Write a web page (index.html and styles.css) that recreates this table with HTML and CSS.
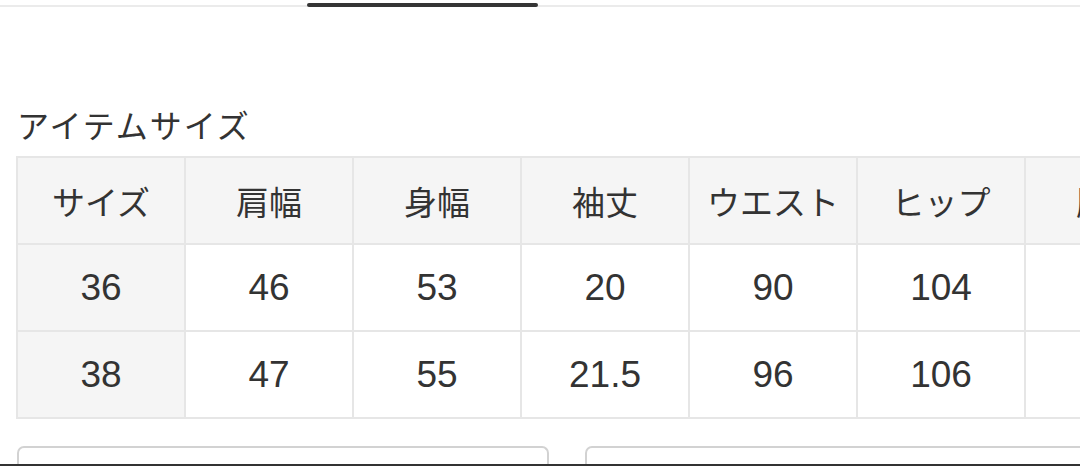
FILE: index.html
```html
<!DOCTYPE html>
<html lang="ja">
<head>
<meta charset="utf-8">
<link rel="stylesheet" href="styles.css">
</head>
<body>
<div class="tabs"><div class="tab-active"></div></div>
<h2 class="title">アイテムサイズ</h2>
<table class="sizes">
  <colgroup>
    <col class="c"><col class="c"><col class="c"><col class="c"><col class="c"><col class="c"><col class="c">
  </colgroup>
  <thead>
    <tr><th>サイズ</th><th>肩幅</th><th>身幅</th><th>袖丈</th><th>ウエスト</th><th>ヒップ</th><th>股下</th></tr>
  </thead>
  <tbody>
    <tr><td class="first">36</td><td>46</td><td>53</td><td>20</td><td>90</td><td>104</td><td></td></tr>
    <tr><td class="first">38</td><td>47</td><td>55</td><td>21.5</td><td>96</td><td>106</td><td></td></tr>
  </tbody>
</table>
<div class="boxes">
  <div class="box box-left"></div>
  <div class="box box-right"></div>
</div>
<div class="edge"></div>
</body>
</html>
```
FILE: styles.css
```css
html, body {
  margin: 0;
  padding: 0;
  background: #fff;
  width: 1080px;
  height: 466px;
  overflow: hidden;
}
body {
  font-family: "Liberation Sans", "Noto Sans CJK JP", sans-serif;
  color: #333;
  display: flex;
  flex-direction: column;
}
.tabs {
  display: flex;
  padding-left: 307px;
  height: 5px;
  border-bottom: 2px solid #ebebeb;
  flex: none;
}
.tab-active {
  width: 231px;
  height: 4px;
  margin-top: 3px;
  background: #353535;
  border-radius: 2px;
}
.title {
  margin: 97px 0 0 17px;
  font-family: "Noto Sans CJK JP", sans-serif;
  font-weight: 400;
  font-size: 32px;
  line-height: 40px;
  height: 40px;
  letter-spacing: 2px;
  flex: none;
}
.sizes {
  margin: 12px 0 0 16px;
  border-collapse: collapse;
  table-layout: fixed;
  width: 1176px;
  flex: none;
}
.sizes .c {
  width: 168px;
}
.sizes th,
.sizes td {
  border: 2px solid #e6e6e6;
  height: 85px;
  padding: 0;
  text-align: center;
  vertical-align: middle;
  white-space: nowrap;
  overflow: hidden;
}
.sizes th {
  background: #f5f5f5;
  font-family: "Noto Sans CJK JP", sans-serif;
  font-weight: 400;
  font-size: 33px;
}
.sizes td {
  font-size: 37px;
  background: #fff;
}
.sizes td.first {
  background: #f5f5f5;
}
.boxes {
  display: flex;
  gap: 36px;
  margin: 27px 0 0 17px;
  height: 18px;
  flex: none;
}
.box {
  flex: none;
  border: 2px solid #d2d2d2;
  border-bottom: none;
  border-radius: 7px 7px 0 0;
  background: #fff;
}
.box-left {
  width: 528px;
}
.box-right {
  width: 520px;
}
.edge {
  height: 2px;
  background: #333;
  flex: none;
}
```
